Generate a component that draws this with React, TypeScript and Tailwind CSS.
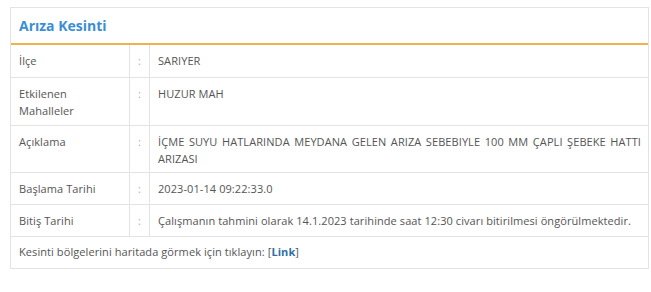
import React from "react";

const rows: { label: React.ReactNode; value: React.ReactNode; h: string; j?: boolean }[] = [
  { label: "İlçe", value: "SARIYER", h: "h-[33px]" },
  { label: <>Etkilenen<br />Mahalleler</>, value: "HUZUR MAH", h: "h-[48px]" },
  {
    label: "Açıklama",
    value: "İÇME SUYU HATLARINDA MEYDANA GELEN ARIZA SEBEBIYLE 100 MM ÇAPLI ŞEBEKE HATTI ARIZASI",
    h: "h-[47px]",
    j: true,
  },
  { label: "Başlama Tarihi", value: "2023-01-14 09:22:33.0", h: "h-[32px]" },
  {
    label: "Bitiş Tarihi",
    value: "Çalışmanın tahmini olarak 14.1.2023 tarihinde saat 12:30 civarı bitirilmesi öngörülmektedir.",
    h: "h-[32px]",
  },
];

export default function App() {
  return (
    <div className="w-[651px] h-[292px] bg-white pt-[7px] pl-[10px] font-['Open_Sans',sans-serif] text-[11px] tracking-[0.08px] text-[#555]">
      <div className="w-[639px] border border-[#e3e3e3]">
        <div className="h-[37px] flex items-center px-[8px] border-b-2 border-[#f0b24a]">
          <span className="text-[14px] font-bold tracking-normal text-[#3a8ed4]">Arıza Kesinti</span>
        </div>
        {rows.map((r, i) => (
          <div key={i} className={`flex border-b border-[#e3e3e3] ${r.h}`}>
            <div className="w-[119px] border-r border-[#e3e3e3] px-[8px] pt-[7px] leading-[17px]">{r.label}</div>
            <div className="w-[20px] border-r border-[#e3e3e3] text-center pt-[7px] leading-[17px] text-[#aaa]">:</div>
            <div className={`flex-1 pl-[8px] pr-[7px] pt-[7px] leading-[17px] ${r.j ? "text-justify" : ""}`}>{r.value}</div>
          </div>
        ))}
        <div className="h-[31px] flex items-center px-[8px]">
          <span>
            Kesinti bölgelerini haritada görmek için tıklayın: [<span className="font-bold text-[#2f6fa8]">Link</span>]
          </span>
        </div>
      </div>
    </div>
  );
}
